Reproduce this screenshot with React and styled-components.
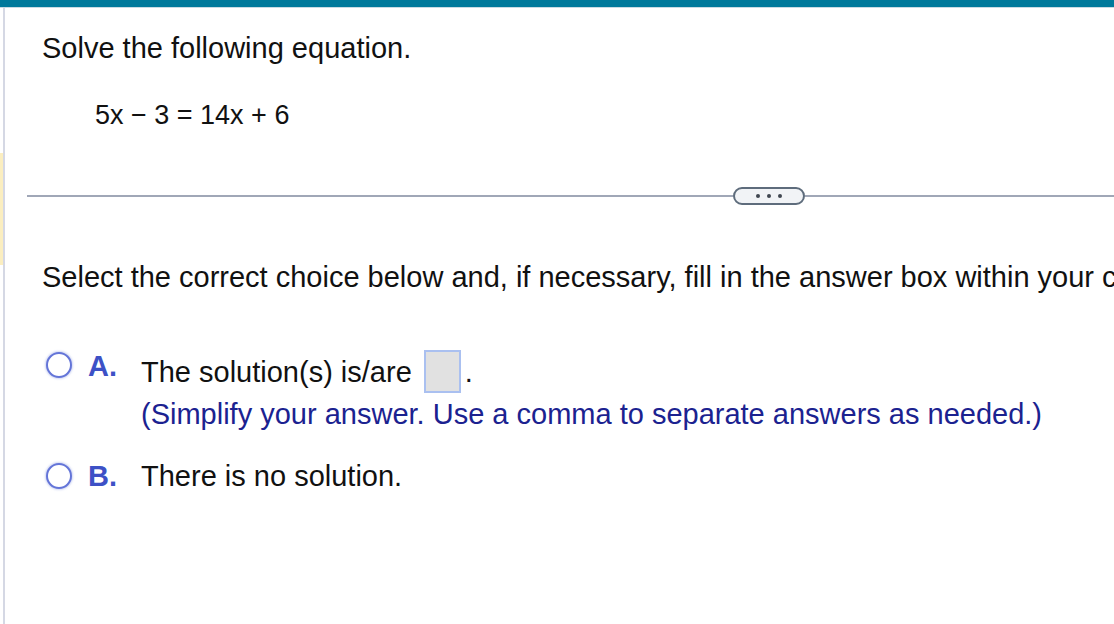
import React from "react";
import styled, { createGlobalStyle } from "styled-components";

const GlobalStyle = createGlobalStyle`
  html, body {
    margin: 0;
    padding: 0;
    background: #ffffff;
    overflow: hidden;
  }
  body {
    font-family: "Liberation Sans", Arial, Helvetica, sans-serif;
    color: #111111;
  }
`;

const Page = styled.div`
  width: 1114px;
  height: 624px;
  overflow: hidden;
  display: flex;
  flex-direction: column;
`;

const TopBar = styled.div`
  height: 7px;
  background: #00799b;
  border-bottom: 1px solid #c9dbe3;
  flex: none;
`;

const Body = styled.div`
  flex: 1;
  display: flex;
  min-height: 0;
`;

const Gutter = styled.div`
  width: 3px;
  flex: none;
  padding-top: 145px;
`;

const Marker = styled.div`
  height: 112px;
  background: #fbeec0;
`;

const Frame = styled.div`
  flex: 1;
  border-left: 2px solid #d5d8e4;
  min-width: 0;
  overflow: hidden;
`;

const Question = styled.div`
  padding: 23px 0 0 37px;
`;

const Prompt = styled.div`
  font-size: 29px;
  line-height: 34px;
  white-space: nowrap;
  margin-top: ${(p) => p.$top || 0}px;
`;

const Equation = styled.div`
  font-size: 27px;
  line-height: 32px;
  margin: 34px 0 0 53px;
  white-space: nowrap;
`;

const DividerRow = styled.div`
  display: flex;
  align-items: center;
  height: 18px;
  margin-top: 56px;
  padding-left: 22px;
  width: 1300px;
`;

const Rule = styled.div`
  height: 2px;
  background: #a0a7b7;
  flex: ${(p) => (p.$grow ? "1" : "none")};
  width: ${(p) => (p.$w ? `${p.$w}px` : "auto")};
`;

const MoreButton = styled.button`
  flex: none;
  width: 72px;
  height: 18px;
  box-sizing: border-box;
  border: 2px solid #5e6c7c;
  border-radius: 9px;
  background: #f1f3f6;
  display: flex;
  align-items: center;
  justify-content: center;
  gap: 7px;
  padding: 0;
`;

const Dot = styled.span`
  width: 4px;
  height: 4px;
  border-radius: 50%;
  background: #3f4650;
`;

const Choices = styled.div`
  padding-left: 37px;
  margin-top: 56px;
  display: flex;
  flex-direction: column;
  gap: 28px;
`;

const Choice = styled.div`
  display: grid;
  grid-template-columns: 42px 53px 1fr;
  align-items: start;
  padding-left: 4px;
`;

const RadioCell = styled.div`
  height: 34px;
  display: flex;
  align-items: center;
  margin-top: ${(p) => p.$shift || 0}px;
`;

const Radio = styled.span`
  width: 26px;
  height: 26px;
  box-sizing: border-box;
  border-radius: 50%;
  border: 2px solid #6475d8;
  box-shadow: 0 0 2px 1px rgba(120, 138, 222, 0.35);
  background: #ffffff;
`;

const Letter = styled.div`
  font-size: 29px;
  font-weight: 700;
  line-height: 34px;
  color: #3d51c6;
  margin-top: ${(p) => p.$shift || 0}px;
`;

const ChoiceBody = styled.div`
  display: flex;
  flex-direction: column;
  gap: 4px;
`;

const ChoiceLine = styled.div`
  display: flex;
  align-items: center;
  font-size: 29px;
  line-height: 34px;
  white-space: nowrap;
  min-height: ${(p) => p.$minH || 34}px;
  color: ${(p) => (p.$hint ? "#1b2290" : "#111111")};
`;

const AnswerBox = styled.span`
  width: 37px;
  height: 43px;
  box-sizing: border-box;
  margin: 0 4px 0 12px;
  background: #e1e1e1;
  border: 2px solid #aac0f0;
`;

export default function App() {
  return (
    <>
      <GlobalStyle />
      <Page>
        <TopBar />
        <Body>
          <Gutter>
            <Marker />
          </Gutter>
          <Frame>
            <Question>
              <Prompt>Solve the following equation.</Prompt>
              <Equation>5x − 3 = 14x + 6</Equation>
            </Question>
            <DividerRow>
              <Rule $w={706} />
              <MoreButton aria-label="more">
                <Dot />
                <Dot />
                <Dot />
              </MoreButton>
              <Rule $grow />
            </DividerRow>
            <Question>
              <Prompt $top={32}>
                Select the correct choice below and, if necessary, fill in the answer box within your choice.
              </Prompt>
            </Question>
            <Choices>
              <Choice>
                <RadioCell $shift={-2}>
                  <Radio />
                </RadioCell>
                <Letter $shift={-1}>A.</Letter>
                <ChoiceBody>
                  <ChoiceLine $minH={43}>
                    The solution(s) is/are
                    <AnswerBox />.
                  </ChoiceLine>
                  <ChoiceLine $hint>
                    (Simplify your answer. Use a comma to separate answers as needed.)
                  </ChoiceLine>
                </ChoiceBody>
              </Choice>
              <Choice>
                <RadioCell>
                  <Radio />
                </RadioCell>
                <Letter>B.</Letter>
                <ChoiceBody>
                  <ChoiceLine>There is no solution.</ChoiceLine>
                </ChoiceBody>
              </Choice>
            </Choices>
          </Frame>
        </Body>
      </Page>
    </>
  );
}
